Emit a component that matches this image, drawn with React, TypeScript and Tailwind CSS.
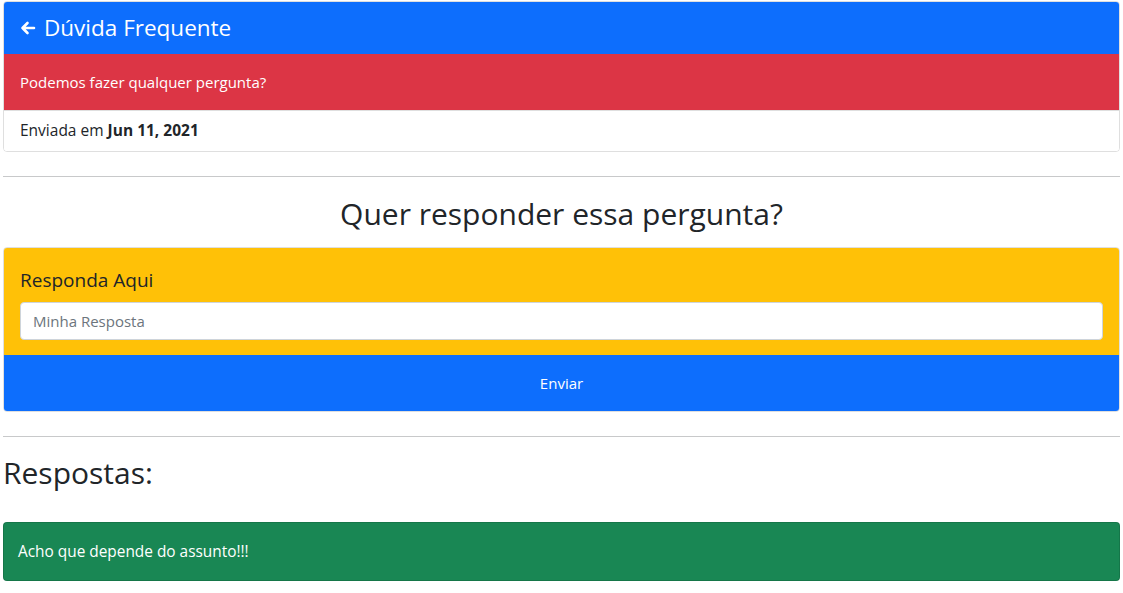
import React from 'react';

const font = { fontFamily: '"Open Sans", "Noto Sans", sans-serif' };

function ArrowBack() {
  return (
    <svg width="16" height="16" viewBox="0 0 16 16" fill="none" stroke="currentColor" strokeWidth="2.6" strokeLinecap="round" strokeLinejoin="round" className="shrink-0">
      <path d="M14 8H2.5M7.5 3 2.5 8l5 5" />
    </svg>
  );
}

export default function App() {
  const [answer, setAnswer] = React.useState('');

  return (
    <div className="min-h-screen bg-white text-[#212529] font-['Open_Sans',sans-serif]" style={font}>
      <div className="px-[3px] pt-[1px]">
        {/* Question card */}
        <div className="rounded-[4px] border border-black/[.125] overflow-hidden">
          <div className="bg-[#0d6efd] text-white flex items-center gap-[8px] px-4 h-[52px]">
            <ArrowBack />
            <h4 className="text-[22.5px] leading-none mt-[1px]">Dúvida Frequente</h4>
          </div>
          <div className="bg-[#dc3545] text-white px-4 h-[56px] flex items-center text-[15px]">
            Podemos fazer qualquer pergunta?
          </div>
          <div className="bg-white px-4 h-[41px] flex items-center text-[15.5px] border-t border-black/[.125]">
            Enviada em&nbsp;<b>Jun 11, 2021</b>
          </div>
        </div>

        <hr className="mt-[24px] border-t border-[#c8c9ca]" />

        <h2 className="text-[30px] leading-[1.2] text-center mt-[19px] mb-[15px]">Quer responder essa pergunta?</h2>

        {/* Answer form */}
        <div className="rounded-[4px] border border-black/[.125] overflow-hidden">
          <div className="bg-[#ffc107] px-4 pt-[21px] pb-[15px]">
            <label className="block text-[19px] leading-[1.2] mb-[10px]">Responda Aqui</label>
            <input
              value={answer}
              onChange={e => setAnswer(e.target.value)}
              placeholder="Minha Resposta"
              className="w-full h-[38px] bg-white border border-[#ced4da] rounded-[4px] px-3 text-[15px] placeholder:text-[#6c757d] outline-none"
            />
          </div>
          <button className="w-full bg-[#0d6efd] text-white h-[56px] text-[15px]">Enviar</button>
        </div>

        <hr className="mt-[24px] border-t border-[#c8c9ca]" />

        <h2 className="text-[30px] leading-[1.2] mt-[18px]">Respostas:</h2>

        <div className="mt-[31px] bg-[#198754] text-white rounded-[4px] border border-black/[.125] h-[59px] px-[14px] flex items-center text-[15.4px]">
          Acho que depende do assunto!!!
        </div>
      </div>
    </div>
  );
}
